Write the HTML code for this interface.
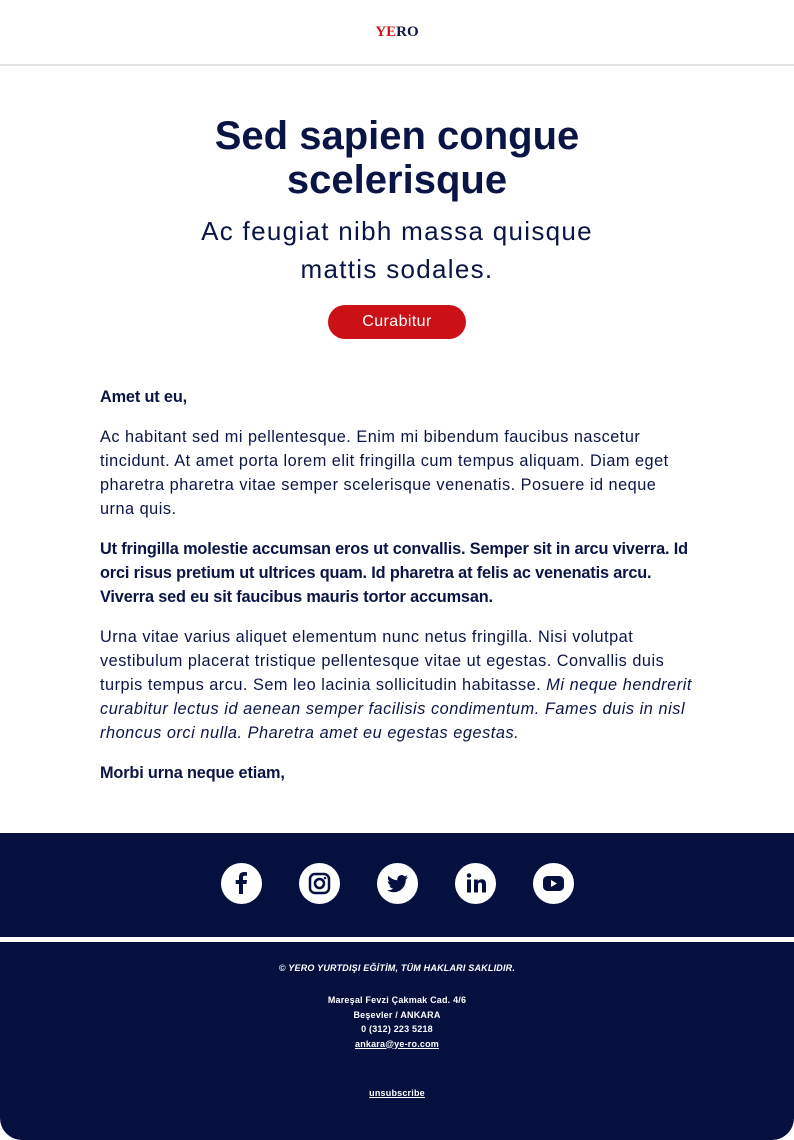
<!DOCTYPE html>
<html><head><meta charset="utf-8"><style>
*{margin:0;padding:0;box-sizing:border-box}
body{width:794px;height:1140px;background:#fff;font-family:"Liberation Sans",sans-serif;color:#0b1545;position:relative;overflow:hidden}
.hdr{height:66px;border-bottom:2px solid #e2e2e2;text-align:center}
.logo{position:absolute;top:24px;left:0;width:794px;text-align:center;font-family:"Liberation Serif",serif;font-weight:bold;font-size:15px;color:#0b1545}
.logo span{color:#d0141c}
h1{position:absolute;top:114px;width:794px;text-align:center;font-size:40px;line-height:44px;font-weight:bold;color:#0b1545}
.sub{position:absolute;top:212px;width:794px;text-align:center;font-size:26px;line-height:38px;letter-spacing:1.3px}
.btn{position:absolute;left:328px;top:305px;width:138px;height:34px;border-radius:17px;background:#cc1116;color:#fff;text-align:center;line-height:34px;font-size:16px;letter-spacing:.4px}
.body{position:absolute;left:100px;top:385px;font-size:16.3px;line-height:24px;white-space:nowrap;letter-spacing:.5px}
.body p{margin-bottom:16px}
b{font-weight:bold;letter-spacing:-.15px}
i{letter-spacing:.55px}
.foot{position:absolute;left:0;top:833px;width:794px;height:307px;background:#06103f;border-radius:0 0 22px 22px;color:#fff}
.icons{position:absolute;top:30px;left:0;width:794px}
.ic{position:absolute;width:41px;height:41px;border-radius:50%;background:#fff;top:0}
.ic svg{position:absolute;left:0;top:0}
.line{position:absolute;top:104px;left:0;width:794px;height:5px;background:#fff}
.ft{position:absolute;width:794px;text-align:center;font-size:9px;font-weight:bold;letter-spacing:.2px}
.ft a{color:#fff;text-decoration:underline}
</style></head><body>
<div class="hdr"></div>
<div class="logo"><span>YE</span>RO</div>
<h1>Sed sapien congue<br>scelerisque</h1>
<div class="sub">Ac feugiat nibh massa quisque<br>mattis sodales.</div>
<div class="btn">Curabitur</div>
<div class="body">
<p><b>Amet ut eu,</b></p>
<p>Ac habitant sed mi pellentesque. Enim mi bibendum faucibus nascetur<br>tincidunt. At amet porta lorem elit fringilla cum tempus aliquam. Diam eget<br>pharetra pharetra vitae semper scelerisque venenatis. Posuere id neque<br>urna quis.</p>
<p><b>Ut fringilla molestie accumsan eros ut convallis. Semper sit in arcu viverra. Id<br>orci risus pretium ut ultrices quam. Id pharetra at felis ac venenatis arcu.<br>Viverra sed eu sit faucibus mauris tortor accumsan.</b></p>
<p>Urna vitae varius aliquet elementum nunc netus fringilla. Nisi volutpat<br>vestibulum placerat tristique pellentesque vitae ut egestas. Convallis duis<br>turpis tempus arcu. Sem leo lacinia sollicitudin habitasse. <i>Mi neque hendrerit<br>curabitur lectus id aenean semper facilisis condimentum. Fames duis in nisl<br>rhoncus orci nulla. Pharetra amet eu egestas egestas.</i></p>
<p><b>Morbi urna neque etiam,</b></p>
</div>
<div class="foot">
<div class="icons">
<div class="ic" style="left:221px"><svg width="41" height="41" viewBox="0 0 41 41"><path d="M22 31V21h3.5l.5-4h-4v-2.5c0-1.1.4-1.8 2-1.8h2V9.2c-.4 0-1.6-.2-3-.2-3 0-5 1.8-5 5.1V17h-3.3v4H18v10z" fill="#06103f"/></svg></div>
<div class="ic" style="left:299px"><svg width="41" height="41" viewBox="0 0 41 41"><rect x="11" y="11" width="19" height="19" rx="5" fill="none" stroke="#06103f" stroke-width="2.5"/><circle cx="20.5" cy="20.5" r="4.5" fill="none" stroke="#06103f" stroke-width="2.5"/><circle cx="26" cy="15" r="1.3" fill="#06103f"/></svg></div>
<div class="ic" style="left:377px"><svg width="41" height="41" viewBox="0 0 41 41"><path d="M31 14c-.8.4-1.6.6-2.5.7.9-.5 1.6-1.4 1.9-2.4-.8.5-1.8.9-2.7 1.1a4.3 4.3 0 0 0-7.3 3.9c-3.6-.2-6.8-1.9-8.9-4.5-1.2 2-.6 4.5 1.3 5.8-.7 0-1.4-.2-2-.5 0 2.1 1.500 3.9 3.4 4.3-.6.2-1.3.2-1.9.1.5 1.7 2.1 3 4 3A8.7 8.7 0 0 1 10 27.3a12.2 12.2 0 0 0 18.8-10.9c.9-.6 1.6-1.4 2.2-2.3z" fill="#06103f"/></svg></div>
<div class="ic" style="left:455px"><svg width="41" height="41" viewBox="0 0 41 41"><circle cx="14" cy="12.5" r="2.2" fill="#06103f"/><rect x="12" y="16.5" width="4" height="13" fill="#06103f"/><path d="M19 16.5h3.8v1.8c.6-1.1 2-2.1 4-2.1 3.4 0 4.2 2.2 4.2 5.2v8.1h-4v-7.2c0-1.6-.3-2.8-1.9-2.8-1.7 0-2.1 1.2-2.1 2.8v7.2h-4z" fill="#06103f"/></svg></div>
<div class="ic" style="left:533px"><svg width="41" height="41" viewBox="0 0 41 41"><rect x="10" y="13" width="21" height="15" rx="4.5" fill="#06103f"/><path d="M18 17v7l6-3.5z" fill="#fff"/></svg></div>
</div>
<div class="line"></div>
<div class="ft" style="top:130px;font-style:italic">© YERO YURTDIŞI EĞİTİM, TÜM HAKLARI SAKLIDIR.</div>
<div class="ft" style="top:160px;line-height:14.5px">Mareşal Fevzi Çakmak Cad. 4/6<br>Beşevler / ANKARA<br>0 (312) 223 5218<br><a>ankara@ye-ro.com</a></div>
<div class="ft" style="top:255px"><a>unsubscribe</a></div>
</div>
</body></html>
